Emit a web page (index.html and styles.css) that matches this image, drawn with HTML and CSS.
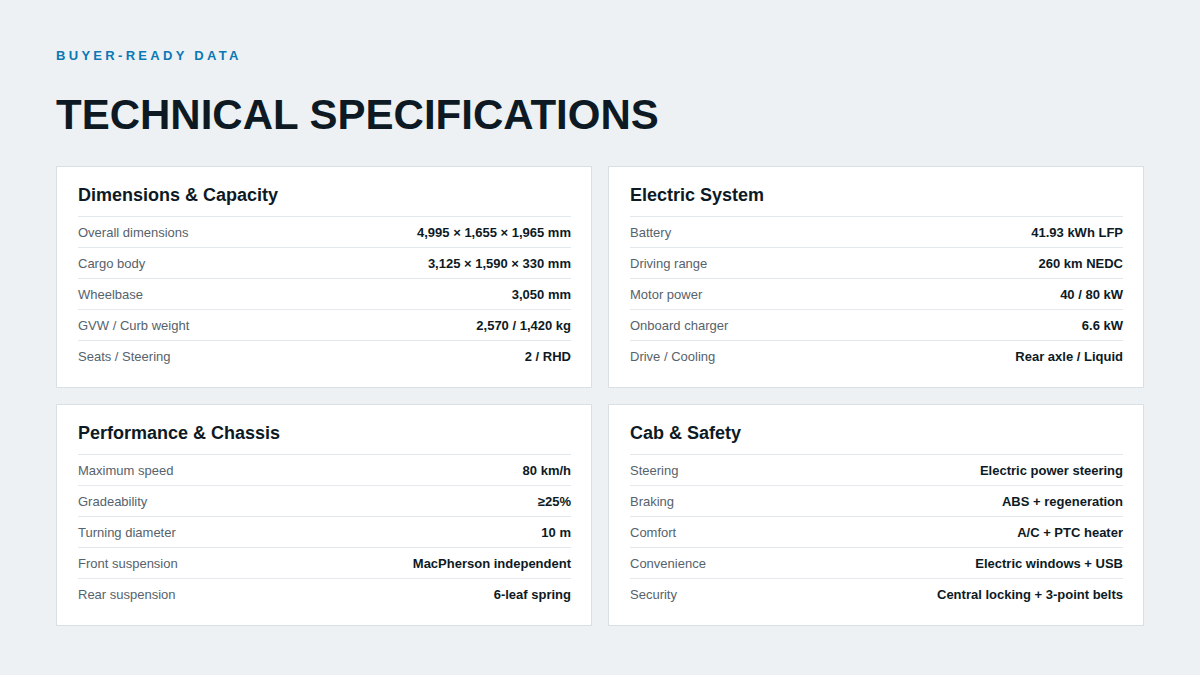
FILE: index.html
```html
<!DOCTYPE html>
<html lang="en">
<head>
<meta charset="utf-8">
<title>Technical Specifications</title>
<link rel="stylesheet" href="styles.css">
</head>
<body>
<main class="page">
  <div class="eyebrow">BUYER-READY DATA</div>
  <h1 class="title">TECHNICAL SPECIFICATIONS</h1>
  <section class="grid">
    <div class="card">
      <h2 class="card-title">Dimensions &amp; Capacity</h2>
      <div class="row"><span class="label">Overall dimensions</span><span class="value">4,995 × 1,655 × 1,965 mm</span></div>
      <div class="row"><span class="label">Cargo body</span><span class="value">3,125 × 1,590 × 330 mm</span></div>
      <div class="row"><span class="label">Wheelbase</span><span class="value">3,050 mm</span></div>
      <div class="row"><span class="label">GVW / Curb weight</span><span class="value">2,570 / 1,420 kg</span></div>
      <div class="row"><span class="label">Seats / Steering</span><span class="value">2 / RHD</span></div>
    </div>
    <div class="card">
      <h2 class="card-title">Electric System</h2>
      <div class="row"><span class="label">Battery</span><span class="value">41.93 kWh LFP</span></div>
      <div class="row"><span class="label">Driving range</span><span class="value">260 km NEDC</span></div>
      <div class="row"><span class="label">Motor power</span><span class="value">40 / 80 kW</span></div>
      <div class="row"><span class="label">Onboard charger</span><span class="value">6.6 kW</span></div>
      <div class="row"><span class="label">Drive / Cooling</span><span class="value">Rear axle / Liquid</span></div>
    </div>
    <div class="card">
      <h2 class="card-title">Performance &amp; Chassis</h2>
      <div class="row"><span class="label">Maximum speed</span><span class="value">80 km/h</span></div>
      <div class="row"><span class="label">Gradeability</span><span class="value">≥25%</span></div>
      <div class="row"><span class="label">Turning diameter</span><span class="value">10 m</span></div>
      <div class="row"><span class="label">Front suspension</span><span class="value">MacPherson independent</span></div>
      <div class="row"><span class="label">Rear suspension</span><span class="value">6-leaf spring</span></div>
    </div>
    <div class="card">
      <h2 class="card-title">Cab &amp; Safety</h2>
      <div class="row"><span class="label">Steering</span><span class="value">Electric power steering</span></div>
      <div class="row"><span class="label">Braking</span><span class="value">ABS + regeneration</span></div>
      <div class="row"><span class="label">Comfort</span><span class="value">A/C + PTC heater</span></div>
      <div class="row"><span class="label">Convenience</span><span class="value">Electric windows + USB</span></div>
      <div class="row"><span class="label">Security</span><span class="value">Central locking + 3-point belts</span></div>
    </div>
  </section>
</main>
</body>
</html>
```

FILE: styles.css
```css
* { box-sizing: border-box; }
html, body { margin: 0; padding: 0; }
body {
  background: #edf1f4;
  font-family: "Liberation Sans", Arial, sans-serif;
  color: #0d1a24;
  width: 1200px;
  height: 675px;
  overflow: hidden;
}
.page {
  padding: 48px 56px 0 56px;
}
.eyebrow {
  font-size: 13px;
  font-weight: 700;
  letter-spacing: 3.3px;
  color: #0a78b4;
  line-height: 16px;
}
.title {
  margin: 25px 0 0 0;
  font-size: 42px;
  line-height: 52px;
  font-weight: 700;
  color: #0d1a24;
  letter-spacing: 0;
}
.grid {
  margin-top: 25px;
  display: grid;
  grid-template-columns: 536px 536px;
  gap: 16px;
}
.card {
  background: #ffffff;
  border: 1px solid #d8e0e6;
  padding: 17px 20px 16px 21px;
  height: 222px;
}
.card-title {
  margin: 0 0 10px 0;
  font-size: 18px;
  line-height: 22px;
  font-weight: 700;
  color: #0d1a24;
}
.row {
  display: flex;
  justify-content: space-between;
  align-items: center;
  height: 31px;
  border-top: 1px solid #e3e8ec;
  font-size: 13px;
}
.label {
  color: #56626c;
}
.value {
  font-weight: 700;
  color: #0d1a24;
}
```
